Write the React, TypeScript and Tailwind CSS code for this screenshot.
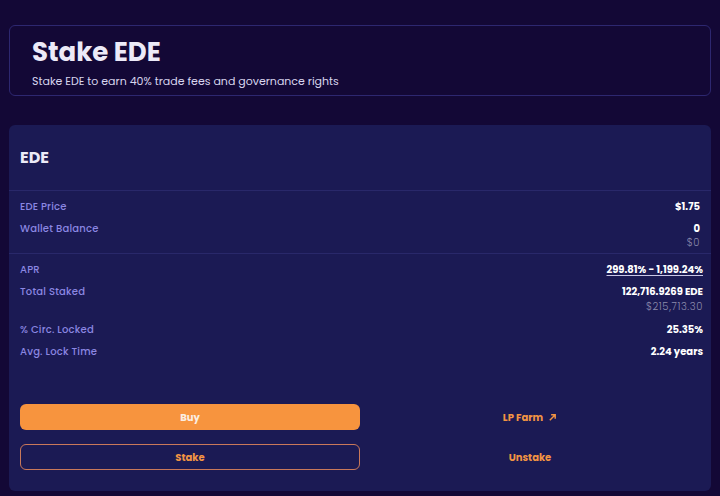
const font = { fontFamily: "Poppins, Inter, 'Noto Sans', sans-serif" };

const Row = ({
  label,
  value,
  sub,
  subGap = "mt-0",
  underline,
}: {
  label: string;
  value: string;
  sub?: string;
  subGap?: string;
  underline?: boolean;
}) => (
  <div className="flex justify-between items-start">
    <span className="text-[10px] leading-[12px] tracking-[0.02em] text-[#8b87e2] font-medium">{label}</span>
    <div className="flex flex-col items-end">
      <span
        className={`text-[10px] leading-[12px] font-bold text-white ${underline ? "underline decoration-[#c9c7e6] underline-offset-2" : ""}`}
      >
        {value}
      </span>
      {sub && (
        <span className={`${subGap} text-[10px] leading-[15px] font-light text-[#8d8cae] tracking-[0.06em]`}>{sub}</span>
      )}
    </div>
  </div>
);

export default function App() {
  return (
    <div className="min-h-[496px] w-[720px] bg-[#130836] pt-[25px] px-[9px] pb-[4px] overflow-hidden" style={font}>
      <div className="h-[71px] rounded-[6px] border border-[#2d2770] pl-[22px] pt-[10px]">
        <h1 className="text-[26px] leading-[32px] font-bold text-[#eceaf8]">Stake EDE</h1>
        <p className="mt-[6px] text-[11px] leading-[14px] text-[#d8d5ee]">
          Stake EDE to earn 40% trade fees and governance rights
        </p>
      </div>

      <div className="mt-[29px] h-[366px] rounded-[6px] bg-[#1b1a54] flex flex-col">
        <div className="h-[66px] flex items-center px-[11px] border-b border-[#29286a]">
          <span className="text-[16px] font-bold text-[#eceaf8] mt-[1px]">EDE</span>
        </div>
        <div className="pl-[11px] pr-[11px] pt-[10px] pb-[3px] flex flex-col gap-[10px] border-b border-[#29286a]">
          <Row label="EDE Price" value="$1.75" />
          <Row label="Wallet Balance" value="0" sub="$0" />
        </div>
        <div className="pl-[11px] pr-[8px] pt-[10px] flex flex-col gap-[10px]">
          <Row label="APR" value="299.81% - 1,199.24%" underline />
          <Row label="Total Staked" value="122,716.9269 EDE" sub="$215,713.30" subGap="mt-[1px]" />
          <Row label="% Circ. Locked" value="25.35%" />
          <Row label="Avg. Lock Time" value="2.24 years" />
        </div>
        <div className="mt-auto pb-[21px] px-[11px] grid grid-cols-2 gap-y-[14px]">
          <button className="h-[26px] rounded-[6px] bg-[#f7943e] text-[10px] font-bold text-[#fbeee2]">Buy</button>
          <div className="flex items-center justify-center gap-[5px] text-[10px] font-bold text-[#f29443]">
            LP Farm
            <svg width="9" height="9" viewBox="0 0 10 10" fill="none" stroke="#f29443" strokeWidth="1.6">
              <path d="M2 8L8 2M3.5 2H8V6.5" />
            </svg>
          </div>
          <button className="h-[26px] rounded-[6px] border border-[#c9785a] text-[10px] font-bold text-[#f29443]">Stake</button>
          <div className="flex items-center justify-center text-[10px] font-bold text-[#f29443]">Unstake</div>
        </div>
      </div>
    </div>
  );
}
